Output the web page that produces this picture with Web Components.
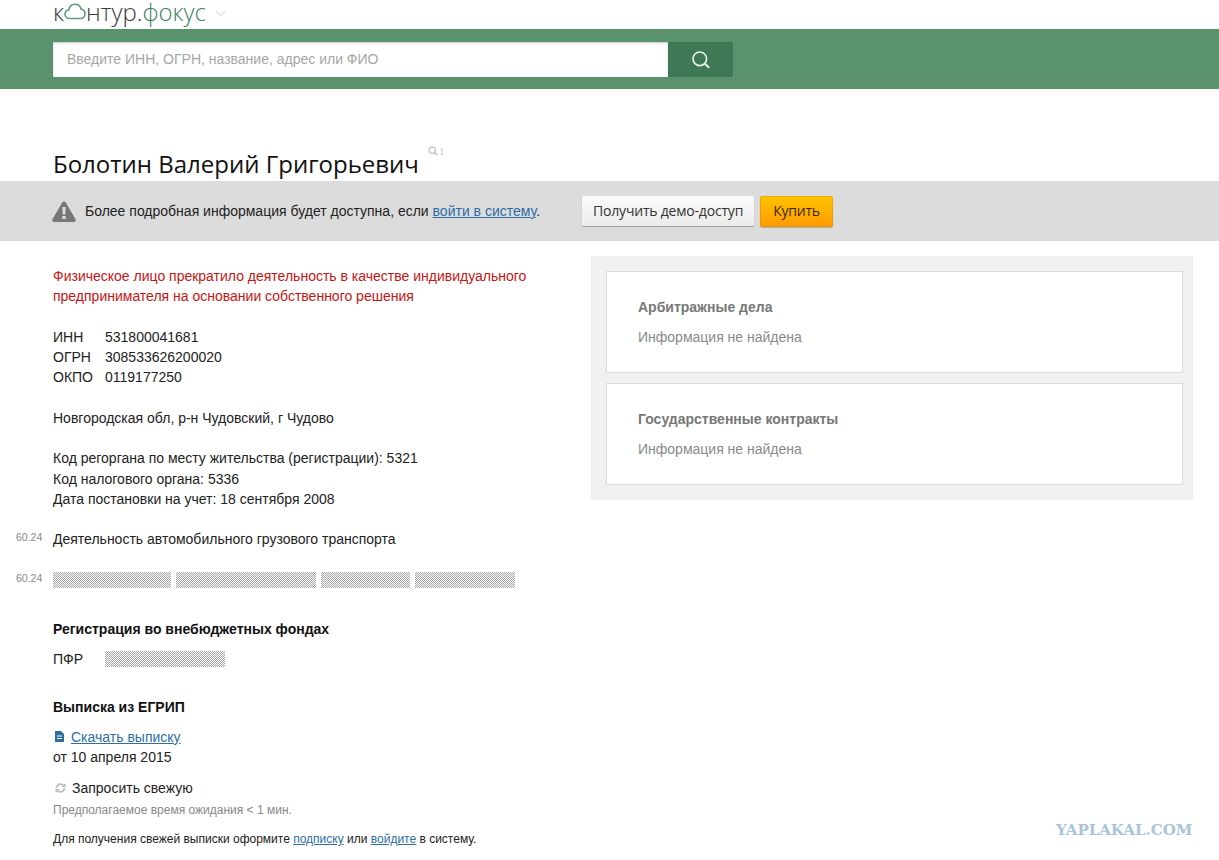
<!DOCTYPE html>
<html lang="ru">
<head>
<meta charset="utf-8">
<title>Контур.Фокус</title>
<style>
    html, body { margin: 0; padding: 0; background: #fff; }
    body { font: 14px/20.25px "Liberation Sans", Arial, sans-serif; color: #222; position: relative; height: 860px; overflow: hidden; }
</style>
</head>
<body>
<focus-header></focus-header>
<search-bar placeholder="Введите ИНН, ОГРН, название, адрес или ФИО"></search-bar>
<page-title count="1">Болотин Валерий Григорьевич</page-title>
<notice-band>
    Более подробная информация будет доступна, если <a slot="link">войти в систему</a>
    <action-button slot="actions">Получить демо-доступ</action-button>
    <action-button slot="actions" kind="buy">Купить</action-button>
</notice-band>
<page-columns>
    <company-details slot="left"></company-details>
    <info-panel slot="right">
        <info-card title="Арбитражные дела">Информация не найдена</info-card>
        <info-card title="Государственные контракты">Информация не найдена</info-card>
    </info-panel>
</page-columns>
<water-mark>YAPLAKAL.COM</water-mark>

<script>
class FocusHeader extends HTMLElement {
    constructor() {
        super();
        this.attachShadow({ mode: 'open' }).innerHTML = `
            <style>
                :host { display: block; height: 29px; overflow: hidden; }
                .logo { display: flex; align-items: center; height: 23px; padding-left: 53px; font: 300 24px/23px "Open Sans", sans-serif; color: #3a3a3a; }
                .logo svg { display: block; }
                .green { color: #3f7f63; }
                .arrow { margin-left: 9px; margin-top: 4px; }
            </style>
            <div class="logo">
                <span>к</span>
                <svg width="22" height="17" viewBox="0 0 22 17" fill="none" stroke="#5a9a78" stroke-width="1.6"><path d="M5.5 15.5C3 15.500 1 13.500 1 11.200C1 9 2.600 7.300 4.700 7C5.400 3.500 8 1.200 11 1.200C14 1.200 16.300 3.200 17 6C19.400 6.400 21 8.400 21 10.800C21 13.500 19 15.500 16.500 15.500Z"/></svg>
                <span>нтур.</span><span class="green">фокус</span>
                <svg class="arrow" width="11" height="7" viewBox="0 0 11 7" fill="none" stroke="#e2e6e3" stroke-width="1.600"><path d="M1 1l4.500 4.500L10 1"/></svg>
            </div>
        `;
    }
}
customElements.define('focus-header', FocusHeader);

class SearchBar extends HTMLElement {
    constructor() {
        super();
        const shadow = this.attachShadow({ mode: 'open' });
        shadow.innerHTML = `
            <style>
                :host { display: block; height: 60px; background: #59926c; padding: 13px 0 0 53px; box-sizing: border-box; }
                .row { display: flex; width: 680px; height: 35px; }
                .field { flex: 1; background: #fff; box-shadow: inset 0 1px 2px rgba(0,0,0,.22); padding-left: 14px; font: 14px/35px "Liberation Sans", sans-serif; color: #a6a6a6; }
                .go { width: 65px; background: #3f7854; border-radius: 0 2px 2px 0; display: flex; align-items: center; justify-content: center; }
            </style>
            <div class="row">
                <div class="field"></div>
                <div class="go">
                    <svg width="20" height="20" viewBox="0 0 20 20" fill="none" stroke="#e9f3ec" stroke-width="1.600"><circle cx="8.800" cy="8.800" r="6.800"/><path d="M13.800 13.800l4.500 4" stroke-width="2"/></svg>
                </div>
            </div>
        `;
        shadow.querySelector('.field').textContent = this.getAttribute('placeholder');
    }
}
customElements.define('search-bar', SearchBar);

class PageTitle extends HTMLElement {
    constructor() {
        super();
        const shadow = this.attachShadow({ mode: 'open' });
        shadow.innerHTML = `
            <style>
                :host { display: flex; align-items: flex-end; height: 92px; box-sizing: border-box; padding: 32px 0 0 53px; }
                h1 { margin: 0; font: 400 24px/34px "Open Sans", sans-serif; color: #111; }
                .count { display: flex; align-items: center; gap: 1px; margin: 0 0 24px 9px; height: 12px; color: #c9c9c9; font: 11px/12px "Liberation Serif", serif; }
            </style>
            <h1><slot></slot></h1>
            <span class="count">
                <svg width="10" height="10" viewBox="0 0 10 10" fill="none" stroke="#c9c9c9" stroke-width="1.500"><circle cx="4.200" cy="4.200" r="3.200"/><path d="M6.600 6.600l2.800 2.800"/></svg>
                <span class="n"></span>
            </span>
        `;
        shadow.querySelector('.n').textContent = this.getAttribute('count');
    }
}
customElements.define('page-title', PageTitle);

class NoticeBand extends HTMLElement {
    constructor() {
        super();
        this.attachShadow({ mode: 'open' }).innerHTML = `
            <style>
                :host { display: flex; align-items: center; height: 60px; background: #dcdcdc; padding-left: 52px; box-sizing: border-box; color: #222; font: 14px/20px "Liberation Sans", sans-serif; }
                svg { flex: none; margin-right: 9px; }
                .msg { white-space: nowrap; }
                .actions { display: flex; align-items: center; gap: 6px; margin-left: 42px; }
                ::slotted(a) { color: #2b6ca8; text-decoration: underline; }
            </style>
            <svg width="24" height="21" viewBox="0 0 24 21"><path fill="#777" d="M12 0.500c.8 0 1.400.4 1.800 1.100l9.700 16.600c.8 1.400-.1 2.800-1.700 2.800H2.200C.6 21-.3 19.600.5 18.200L10.200 1.600C10.600.9 11.200.5 12 .5z"/><path fill="#dcdcdc" d="M10.300 6h3.400l-.5 7.500h-2.400zM10.300 15h3.400v3h-3.400z"/></svg>
            <span class="msg"><slot></slot><slot name="link"></slot>.</span>
            <div class="actions"><slot name="actions"></slot></div>
        `;
    }
}
customElements.define('notice-band', NoticeBand);

class ActionButton extends HTMLElement {
    constructor() {
        super();
        this.attachShadow({ mode: 'open' }).innerHTML = `
            <style>
                :host { display: block; box-sizing: border-box; height: 30px; padding: 0 11px; font: 14px/29px "Open Sans", sans-serif; letter-spacing: -.2px; color: #333; white-space: nowrap; border-radius: 2px; background: linear-gradient(#fbfbfb, #ececec); box-shadow: 0 1px 1px rgba(0,0,0,.3); }
                :host([kind="buy"]) { height: 31px; padding: 0 13px; line-height: 30px; color: #3b2a00; background: linear-gradient(#ffc400, #ff9a00); box-shadow: 0 0 0 1px rgba(200,130,0,.3) inset, 0 1px 1px rgba(0,0,0,.2); }
            </style>
            <slot></slot>
        `;
    }
}
customElements.define('action-button', ActionButton);

class PageColumns extends HTMLElement {
    constructor() {
        super();
        this.attachShadow({ mode: 'open' }).innerHTML = `
            <style>
                :host { display: grid; grid-template-columns: 591px 602px; align-items: start; padding-top: 15px; }
            </style>
            <slot name="left"></slot>
            <slot name="right"></slot>
        `;
    }
}
customElements.define('page-columns', PageColumns);

class CompanyDetails extends HTMLElement {
    constructor() {
        super();
        this.attachShadow({ mode: 'open' }).innerHTML = `
            <style>
                :host { display: block; padding: 10px 0 0 53px; font: 14px/20.25px "Liberation Sans", sans-serif; color: #222; }
                p { margin: 0 0 20.25px; }
                .red { color: #c91414; width: 500px; }
                .ids { display: grid; grid-template-columns: 52px auto; justify-content: start; margin-bottom: 20.25px; }
                .coded { position: relative; }
                .code { position: absolute; left: -37px; top: -2px; font-size: 10.5px; color: #888; }
                .hidden { display: inline-block; height: 16px; vertical-align: -3px; background: repeating-conic-gradient(#a5a5a5 0 25%, #fff 0 50%) 0 0 / 2px 2px; }
                .blocks { display: flex; gap: 5px; height: 20px; align-items: center; }
                h3 { margin: 0; font: bold 14px/20px "Liberation Sans", sans-serif; color: #111; }
                .funds { margin-top: 29px; }
                .pfr { display: grid; grid-template-columns: 52px auto; justify-content: start; align-items: center; height: 20px; margin-top: 10px; }
                .extract { margin-top: 28px; }
                a { color: #2d6f9f; text-decoration: underline; }
                .dl { margin-top: 10px; display: flex; align-items: center; gap: 7px; padding-left: 2px; height: 20px; }
                .refresh { margin-top: 11px; display: flex; align-items: center; gap: 6px; padding-left: 2px; height: 20px; }
                .hint { margin-top: 2px; font-size: 12px; color: #888; line-height: 20px; }
                .sub { margin-top: 9px; font-size: 12px; color: #222; line-height: 20px; }
            </style>
            <p class="red">Физическое лицо прекратило деятельность в качестве индивидуального предпринимателя на основании собственного решения</p>
            <div class="ids">
                <span>ИНН</span><span>531800041681</span>
                <span>ОГРН</span><span>308533626200020</span>
                <span>ОКПО</span><span>0119177250</span>
            </div>
            <p>Новгородская обл, р-н Чудовский, г Чудово</p>
            <p>Код регоргана по месту жительства (регистрации): 5321<br>Код налогового органа: 5336<br>Дата постановки на учет: 18 сентября 2008</p>
            <p class="coded"><span class="code">60.24</span>Деятельность автомобильного грузового транспорта</p>
            <div class="coded blocks"><span class="code">60.24</span>
                <span class="hidden" style="width:118px"></span><span class="hidden" style="width:140px"></span><span class="hidden" style="width:89px"></span><span class="hidden" style="width:100px"></span>
            </div>
            <h3 class="funds">Регистрация во внебюджетных фондах</h3>
            <div class="pfr"><span>ПФР</span><span class="hidden" style="width:120px"></span></div>
            <h3 class="extract">Выписка из ЕГРИП</h3>
            <div class="dl">
                <svg width="9" height="11" viewBox="0 0 9 11"><path fill="#2d6f9f" d="M0 0h6l3 3v8H0z"/><path stroke="#fff" d="M2 5h5M2 7.500h5"/></svg>
                <a>Скачать выписку</a>
            </div>
            <div>от 10 апреля 2015</div>
            <div class="refresh">
                <svg width="11" height="10" viewBox="0 0 11 10" fill="none" stroke="#bbb" stroke-width="1.600"><path d="M1.500 5a4 4 0 0 1 7-2.500"/><path d="M9.500 5a4 4 0 0 1-7 2.500"/><path fill="#bbb" stroke="none" d="M10.500 0v4h-4zM.5 10V6h4z"/></svg>
                <span>Запросить свежую</span>
            </div>
            <div class="hint">Предполагаемое время ожидания &lt; 1 мин.</div>
            <div class="sub">Для получения свежей выписки оформите <a>подписку</a> или <a>войдите</a> в систему.</div>
        `;
    }
}
customElements.define('company-details', CompanyDetails);

class InfoPanel extends HTMLElement {
    constructor() {
        super();
        this.attachShadow({ mode: 'open' }).innerHTML = `
            <style>
                :host { display: flex; flex-direction: column; gap: 10px; background: #f0f0f0; padding: 15px 10px 15px 15px; }
            </style>
            <slot></slot>
        `;
    }
}
customElements.define('info-panel', InfoPanel);

class InfoCard extends HTMLElement {
    constructor() {
        super();
        const shadow = this.attachShadow({ mode: 'open' });
        shadow.innerHTML = `
            <style>
                :host { display: block; box-sizing: border-box; height: 102px; background: #fff; border: 1px solid #dcdcdc; padding: 25px 31px; font: 14px/20px "Liberation Sans", sans-serif; color: #8a8a8a; }
                h4 { margin: 0 0 10px; font: bold 14px/20px "Liberation Sans", sans-serif; color: #777; }
            </style>
            <h4></h4>
            <slot></slot>
        `;
        shadow.querySelector('h4').textContent = this.getAttribute('title');
    }
}
customElements.define('info-card', InfoCard);

class WaterMark extends HTMLElement {
    constructor() {
        super();
        this.attachShadow({ mode: 'open' }).innerHTML = `
            <style>
                :host { position: absolute; left: 1056px; top: 821px; font: bold 15px/18px "DejaVu Serif", serif; color: #a9c5d8; white-space: nowrap; }
            </style>
            <slot></slot>
        `;
    }
}
customElements.define('water-mark', WaterMark);
</script>
</body>
</html>
